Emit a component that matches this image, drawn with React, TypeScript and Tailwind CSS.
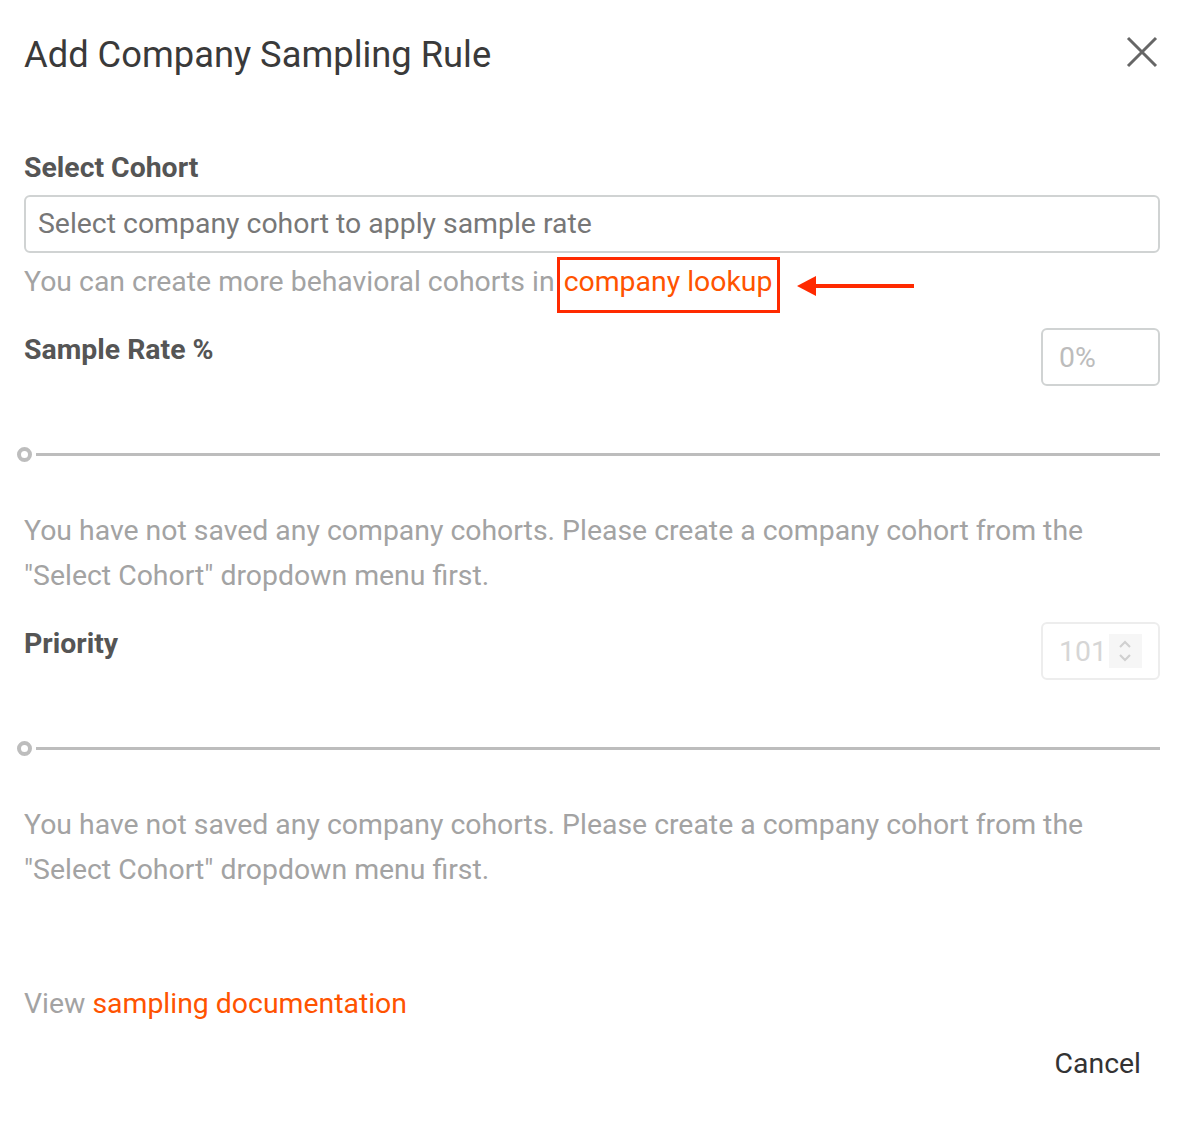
import React from 'react';

function Slider() {
  return (
    <div className="mt-[58px] flex h-[20px] items-center">
      <span className="ml-[-7px] block h-[15px] w-[15px] rounded-full border-[4px] border-[#bdbdbd] bg-white" />
      <span className="ml-[4px] block h-[3px] flex-1 bg-[#bdbdbd]" />
    </div>
  );
}

function Notice() {
  return (
    <p className="mt-[44px] text-[28.4px] leading-[45px] text-[#a3a3a3]">
      You have not saved any company cohorts. Please create a company cohort from the
      <br />
      "Select Cohort" dropdown menu first.
    </p>
  );
}

export default function App() {
  return (
    <div
      className="w-[1185px] min-h-[1121px] bg-white pl-[24px] pr-[25px]"
      style={{ fontFamily: 'Roboto, "Noto Sans", sans-serif' }}
    >
      <div className="flex items-center justify-between pt-[35px]">
        <h1 className="text-[36.3px] leading-[40px] text-[#3a3a3a]">Add Company Sampling Rule</h1>
        <button className="mr-[2px] mt-[-6px] text-[#666]">
          <svg width="32" height="32" viewBox="0 0 32 32" fill="none" stroke="currentColor" strokeWidth="3">
            <path d="M2 2 L30 30 M30 2 L2 30" />
          </svg>
        </button>
      </div>

      <div className="mt-[78px] text-[28.4px] font-bold leading-[30px] text-[#555]">Select Cohort</div>
      <div className="mt-[12px] flex h-[58px] items-center rounded-[6px] border-2 border-[#d0d3d3] px-[12px] text-[28.4px] text-[#777]">
        Select company cohort to apply sample rate
      </div>
      <div className="mt-[13px] flex items-center pt-[1px] text-[28.4px] leading-[30px] text-[#a3a3a3]">
        <span>You can create more behavioral cohorts in</span>
        <span className="relative ml-[9px] text-[#ff5300]">
          company lookup
          <span className="absolute left-[-7px] right-[-8px] top-[-10px] bottom-[-16px] border-[3px] border-[#ff2a00]" />
        </span>
        <svg className="ml-[25px] mt-[8px]" width="118" height="22" viewBox="0 0 118 22">
          <polygon points="0,11 19,1 19,21" fill="#ff2a00" />
          <rect x="17" y="9" width="100" height="4" fill="#ff2a00" />
        </svg>
      </div>

      <div className="mt-[31px] flex items-start justify-between">
        <div className="mt-[7px] text-[28.4px] font-bold leading-[30px] text-[#555]">Sample Rate %</div>
        <div className="flex h-[58px] w-[119px] items-center rounded-[6px] border-2 border-[#d0d3d3] px-[16px] pt-[3px] text-[28.4px] text-[#bcbcbc]">
          0%
        </div>
      </div>
      <Slider />
      <Notice />

      <div className="mt-[24px] flex items-start justify-between">
        <div className="mt-[7px] text-[28.4px] font-bold leading-[30px] text-[#555]">Priority</div>
        <div className="flex h-[58px] w-[119px] items-center rounded-[6px] border-2 border-[#ededed] pl-[16px] text-[28.4px] text-[#d6d6d6]">
          <span className="pt-[3px]">101</span>
          <span className="ml-[2px] flex h-[34px] w-[33px] items-center justify-center bg-[#f6f6f6]">
            <svg width="14" height="26" viewBox="0 0 14 26" fill="none" stroke="#d0d0d0" strokeWidth="2.2">
              <path d="M2 9 L7 4 L12 9 M2 17 L7 22 L12 17" />
            </svg>
          </span>
        </div>
      </div>
      <Slider />
      <Notice />

      <div className="mt-[97px] text-[28.4px] leading-[30px] text-[#a3a3a3]">
        View <span className="text-[#ff5300]">sampling documentation</span>
      </div>

      <div className="mt-[30px] flex justify-end">
        <button className="mr-[19px] text-[28.4px] leading-[30px] text-[#333]">Cancel</button>
      </div>
    </div>
  );
}
